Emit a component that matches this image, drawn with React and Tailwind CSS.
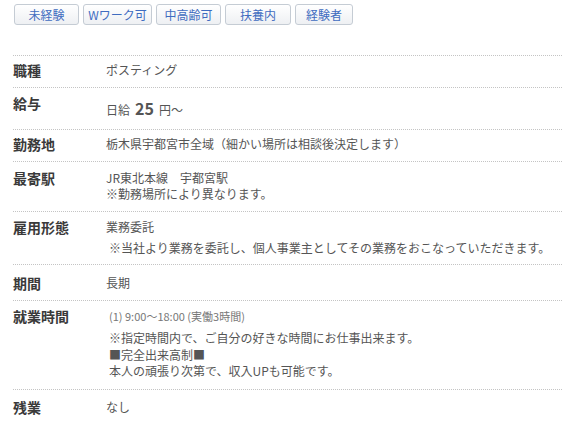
const tags = [
  { label: '未経験', w: 'w-[65px]' },
  { label: 'Wワーク可', w: 'w-[69px]' },
  { label: '中高齢可', w: 'w-[65px]' },
  { label: '扶養内', w: 'w-[66px]' },
  { label: '経験者', w: 'w-[58px]' },
]

const Row = ({ label, pad, children }) => (
  <div className={`grid grid-cols-[93px_1fr] border-b border-dotted border-[#c4c4c4] ${pad}`}>
    <dt className="text-[14px] leading-[16px] font-bold text-[#3a3a3a]">{label}</dt>
    <dd className="text-[12px] leading-[16px] text-[#555]">{children}</dd>
  </div>
)

const App = () => {
  return (
    <div className="h-[423px] w-[562px] overflow-hidden bg-white pl-[13px] font-['Noto_Sans_CJK_JP',sans-serif]">
      <div className="flex gap-[4px] pl-[1px] pt-[4px]">
        {tags.map((tag) => (
          <span
            key={tag.label}
            className={`${tag.w} flex h-[21px] shrink-0 items-center justify-center rounded-[3px] border border-[#c5ccd4] bg-gradient-to-b from-white to-[#eef0f3] text-[12px] text-[#3f6cc0]`}
          >
            {tag.label}
          </span>
        ))}
      </div>

      <dl className="mt-[30px] border-t border-dotted border-[#c4c4c4]">
        <Row label="職種" pad="pt-[6px] pb-[9px]">
          ポスティング
        </Row>
        <Row label="給与" pad="pt-[7px] pb-[11px]">
          <div className="mt-[5px] flex items-baseline">
            日給<span className="mx-[5px] text-[16px] font-bold text-[#555]">25</span>円～
          </div>
        </Row>
        <Row label="勤務地" pad="pt-[6px] pb-[9px]">
          栃木県宇都宮市全域（細かい場所は相談後決定します）
        </Row>
        <Row label="最寄駅" pad="pt-[8px] pb-[9px]">
          <p>JR東北本線　宇都宮駅</p>
          <p>※勤務場所により異なります。</p>
        </Row>
        <Row label="雇用形態" pad="pt-[7px] pb-[8px]">
          <p>業務委託</p>
          <p className="mt-[5px] pl-[3px]">※当社より業務を委託し、個人事業主としてその業務をおこなっていただきます。</p>
        </Row>
        <Row label="期間" pad="pt-[10px] pb-[9px]">
          長期
        </Row>
        <Row label="就業時間" pad="pt-[7px] pb-[9px]">
          <p className="pl-[3px] text-[11px] text-[#777]">(1) 9:00～18:00 (実働3時間)</p>
          <div className="mt-[6px] pl-[3px] leading-[16.5px]">
            <p>※指定時間内で、ご自分の好きな時間にお仕事出来ます。</p>
            <p>■完全出来高制■</p>
            <p>本人の頑張り次第で、収入UPも可能です。</p>
          </div>
        </Row>
        <div className="grid grid-cols-[93px_1fr] pt-[9px]">
          <dt className="text-[14px] leading-[16px] font-bold text-[#3a3a3a]">残業</dt>
          <dd className="text-[12px] leading-[16px] text-[#555]">なし</dd>
        </div>
      </dl>
    </div>
  )
}

export default App
